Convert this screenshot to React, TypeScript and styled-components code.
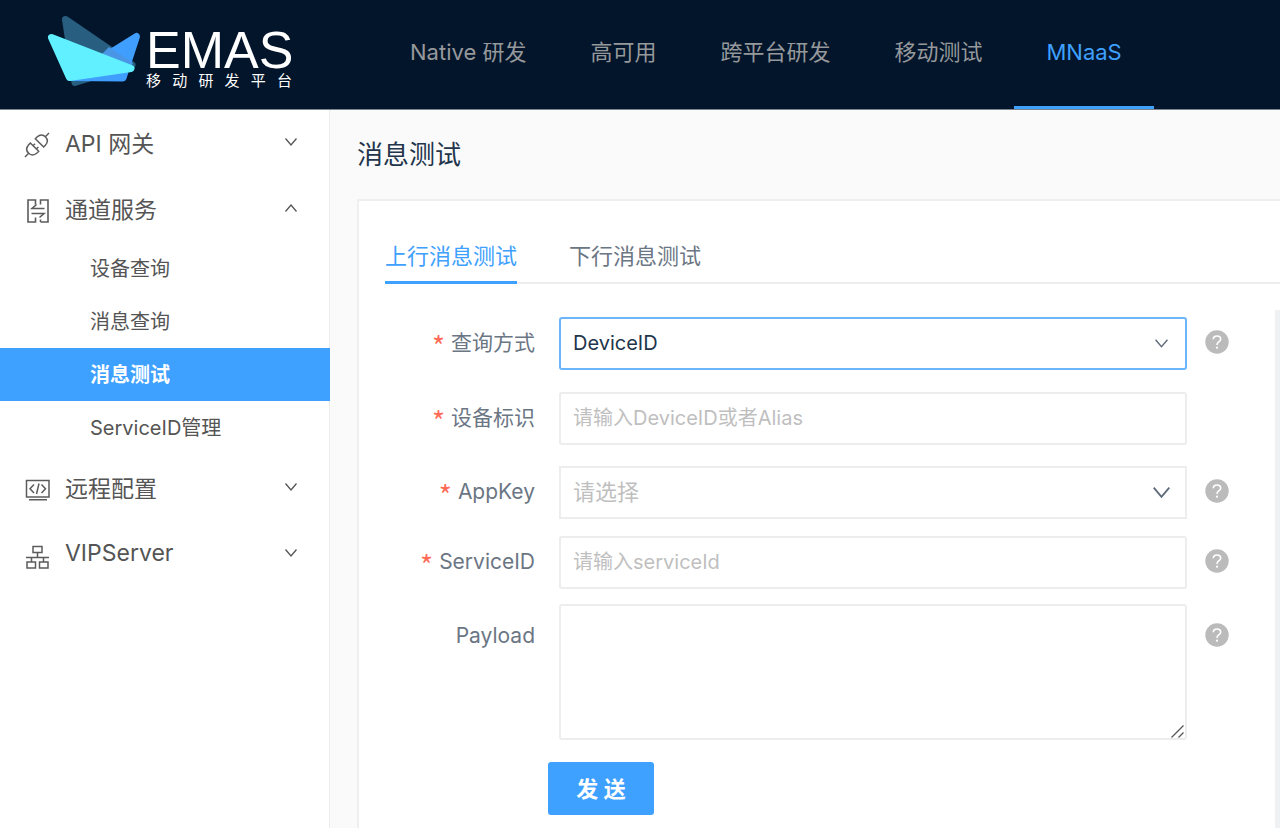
import React from "react";
import styled, { createGlobalStyle, css } from "styled-components";

const GlobalStyle = createGlobalStyle`
  *, *::before, *::after { box-sizing: border-box; }
  body {
    margin: 0;
    background: #fafafa;
    font-family: Inter, "Noto Sans CJK SC", sans-serif;
    font-size: 22px;
  }
  button, input, select, textarea { font-family: inherit; }
  ul { list-style: none; margin: 0; padding: 0; }
  a { color: inherit; text-decoration: none; }
`;

const blue = "#3ea0ff";

const Page = styled.div`
  display: flex;
  flex-direction: column;
  height: 100vh;
  overflow: hidden;
`;

const Header = styled.header`
  display: flex;
  flex: none;
  height: 110px;
  background: #03152a;
  border-bottom: 1px solid #7b8590;
`;

const Brand = styled.a`
  display: flex;
  flex: none;
  width: 378px;
  padding: 14px 0 0 46px;
  color: #fff;
`;

const BrandText = styled.div`
  width: 146px;
  padding-top: 13px;
  margin-left: 4px;
`;

const BrandName = styled.div`
  font-family: "Liberation Sans", sans-serif;
  font-size: 52px;
  line-height: 46px;
`;

const BrandSub = styled.div`
  font-size: 15px;
  line-height: 15px;
  text-align-last: justify;
`;

const Nav = styled.nav`
  display: flex;
`;

const NavLink = styled.a<{ $active?: boolean }>`
  padding: 36px 32px 0;
  line-height: 32px;
  white-space: nowrap;
  color: ${(p) => (p.$active ? blue : "#96999c")};
  border-bottom: 3px solid ${(p) => (p.$active ? blue : "transparent")};
`;

const Body = styled.div`
  display: flex;
  flex: 1;
  min-height: 0;
`;

const Sidebar = styled.aside`
  flex: none;
  width: 330px;
  background: #fff;
  border-right: 1px solid #ececec;
  color: #555;
`;

const GroupButton = styled.button`
  display: flex;
  align-items: center;
  width: 100%;
  height: 66px;
  padding: 0 32px 2px 22px;
  border: 0;
  background: none;
  color: inherit;
  font-size: 23px;
  text-align: left;
`;

const GroupIcon = styled.span`
  display: flex;
  justify-content: center;
  width: 30px;
  margin-right: 13px;
  padding-top: 5px;
  color: #5c5c5c;
`;

const GroupName = styled.span`
  flex: 1;
`;

const SubList = styled.ul`
  padding-bottom: 1px;
`;

const SubLink = styled.a<{ $active?: boolean }>`
  display: block;
  padding: 2px 0 0 90px;
  margin-right: -1px;
  font-size: 20px;
  line-height: 51px;
  ${(p) =>
    p.$active &&
    css`
      background: ${blue};
      color: #fff;
      font-weight: 600;
    `}
`;

const Main = styled.main`
  display: flex;
  flex: 1;
  flex-direction: column;
  min-width: 0;
  padding: 25px 0 0 27px;
`;

const Title = styled.h1`
  margin: 0 0 24px;
  font-size: 26px;
  line-height: 40px;
  font-weight: 400;
  color: #22354b;
`;

const Card = styled.section`
  display: flex;
  flex: 1;
  flex-direction: column;
  min-height: 0;
  background: #fff;
  border: 2px solid #efefef;
  border-right: 0;
  border-bottom: 0;
`;

const Tabs = styled.div`
  display: flex;
  gap: 52px;
  height: 83px;
  padding-top: 27px;
  margin-left: 26px;
  border-bottom: 2px solid #ededee;
`;

const Tab = styled.button<{ $active?: boolean }>`
  height: 56px;
  padding: 0 0 1px;
  border: 0;
  border-bottom: 3px solid ${(p) => (p.$active ? blue : "transparent")};
  background: none;
  font-size: 22px;
  color: ${(p) => (p.$active ? blue : "#6b7684")};
`;

const Form = styled.form`
  flex: 1;
  min-height: 0;
  margin-top: 26px;
  padding: 7px 46px 0 26px;
  border-right: 5px solid #f0f1f3;
`;

const Row = styled.div<{ $gap: number }>`
  display: grid;
  grid-template-columns: 174px minmax(0, 1fr) 42px;
  margin-bottom: ${(p) => p.$gap}px;
`;

const Label = styled.label<{ $low?: boolean }>`
  display: flex;
  justify-content: flex-end;
  gap: 6px;
  padding-right: 24px;
  font-size: 21px;
  line-height: 52px;
  padding-top: ${(p) => (p.$low ? 6 : 0)}px;
  white-space: nowrap;
  color: #6b7684;
`;

const Star = styled.span`
  padding-top: 3px;
  color: #ff6b57;
  font-family: "Noto Sans CJK SC", sans-serif;
  font-size: 28px;
  line-height: 50px;
`;

const Field = styled.div`
  position: relative;
  display: flex;
`;

const control = css`
  width: 100%;
  height: 53px;
  padding: 0 12px 1px;
  border: 2px solid #ededed;
  border-radius: 3px;
  background: #fff;
  outline: none;
  font-size: 20px;
  color: #22354b;
  &::placeholder { color: #bfbfbf; opacity: 1; }
`;

const TextInput = styled.input`
  ${control}
`;

const Select = styled.select<{ $focus?: boolean; $empty?: boolean }>`
  ${control}
  appearance: none;
  ${(p) => p.$focus && css`border-color: #6bb5fb;`}
  ${(p) =>
    p.$empty &&
    css`
      border-radius: 0;
      font-size: 22px;
      color: #bfbfbf;
    `}
`;

const TextArea = styled.textarea`
  ${control}
  display: block;
  height: 136px;
  resize: none;
`;

const Arrow = styled.span`
  position: absolute;
  right: 16px;
  top: 0;
  display: flex;
  align-items: center;
  justify-content: center;
  width: 20px;
  height: 100%;
  color: #5f6b7b;
  pointer-events: none;
`;

const Grip = styled.svg`
  position: absolute;
  right: 3px;
  bottom: 2px;
  pointer-events: none;
`;

const Help = styled.button<{ $low?: boolean }>`
  display: flex;
  align-items: center;
  width: 24px;
  height: 49px;
  padding: 0;
  margin: ${(p) => (p.$low ? 6 : 0)}px 0 0 18px;
  border: 0;
  background: none;
`;

const Submit = styled.button`
  display: block;
  width: 106px;
  height: 53px;
  margin-left: 163px;
  padding: 0 0 3px;
  border: 0;
  border-radius: 3px;
  background: ${blue};
  color: #fff;
  font-size: 22px;
  font-weight: 600;
`;

const Logo = () => (
  <svg width="96" height="74" viewBox="46 14 96 74" strokeLinejoin="round" strokeWidth="7" aria-hidden="true">
    <path d="M65.5 19.5 L132 65 L75 82.500 Z" fill="#285e80" stroke="#285e80" />
    <path d="M136.500 36.500 L123 78 L71 77.500 Z" fill="#409eff" stroke="#409eff" />
    <path d="M109 47 L133 63 L131 67 L101 55 Z" fill="#4a96e6" />
    <path d="M51.500 37.500 L131 68.500 L69.500 77.500 Z" fill="#60f0ff" stroke="#60f0ff" />
  </svg>
);

const Chevron = ({ up, size = 12 }: { up?: boolean; size?: number }) => (
  <svg width={size} height={size} viewBox="0 0 12 12" fill="none" stroke="currentColor" strokeWidth="1.300" aria-hidden="true">
    <path d={up ? "M.5 9.500 L6 3 L11.500 9.500" : "M.5 2.500 L6 9 L11.500 2.500"} />
  </svg>
);

const ApiIcon = () => (
  <svg width="26" height="26" viewBox="-2 -2 78 78" fill="none" stroke="currentColor" strokeWidth="4.500" aria-hidden="true">
    <path d="M17 31 L42 56 L37 61 C28 69 18 68 12 62 C5 55 4 45 12 36 Z M1 73 L12 62 M25 39 L31 33 M35 49 L41 43" />
    <path d="M57 43 L32 18 L37 13 C46 5 56 6 62 12 C69 19 70 29 62 38 Z M73 1 L62 12" />
  </svg>
);

const ChannelIcon = () => (
  <svg width="26" height="26" viewBox="0 0 26 26" fill="none" stroke="currentColor" strokeWidth="1.600" aria-hidden="true">
    <path d="M11.500 6.500 V2 H4 V24 H11.500 V19.500" />
    <path d="M16.500 24 H24 V2 H16.500 V6.500 M16.500 24 V21.500" />
    <path d="M12.500 6.500 L8 10.500 H20.500 M7.500 15.500 H20 L15.500 19.500" />
  </svg>
);

const CodeIcon = () => (
  <svg width="26" height="26" viewBox="0 0 26 26" fill="none" stroke="currentColor" strokeWidth="1.500" aria-hidden="true">
    <path d="M2.500 3.500 H25 V20 H2.500 Z M5 22.800 H23" />
    <path d="M10 7.500 L6 11.700 L10 16 M17.500 7.500 L21.500 11.700 L17.500 16 M15 6.500 L12.500 17" />
  </svg>
);

const ServerIcon = () => (
  <svg width="26" height="26" viewBox="0 0 26 26" fill="none" stroke="currentColor" strokeWidth="1.500" aria-hidden="true">
    <path d="M9 3.500 H18 V9.500 H9 Z M3 19 H11.500 V25 H3 Z M15.500 19 H24 V25 H15.500 Z" />
    <path d="M13.500 9.500 V14.500 M2 14.500 H25 M7.500 14.500 V19 M19.500 14.500 V19" />
  </svg>
);

const HelpButton = ({ low }: { low?: boolean }) => (
  <Help type="button" aria-label="帮助" $low={low}>
    <svg width="24" height="24" viewBox="0 0 24 24" fill="none" aria-hidden="true">
      <circle cx="12" cy="12" r="11.700" fill="#bbb" />
      <path d="M8.300 9.300 C8.300 4.900 15.700 4.900 15.700 9.300 C15.700 11.800 12 11.700 12 15" stroke="#fff" strokeWidth="1.600" />
      <circle cx="12" cy="17.700" r="1.100" fill="#fff" />
    </svg>
  </Help>
);

const navItems = ["Native 研发", "高可用", "跨平台研发", "移动测试", "MNaaS"];

const groups = [
  { name: "API 网关", icon: <ApiIcon /> },
  {
    name: "通道服务",
    icon: <ChannelIcon />,
    children: ["设备查询", "消息查询", "消息测试", "ServiceID管理"],
  },
  { name: "远程配置", icon: <CodeIcon /> },
  { name: "VIPServer", icon: <ServerIcon /> },
];

export default function App() {
  return (
    <Page>
      <GlobalStyle />
      <Header>
        <Brand href="#">
          <Logo />
          <BrandText>
            <BrandName>EMAS</BrandName>
            <BrandSub>移 动 研 发 平 台</BrandSub>
          </BrandText>
        </Brand>
        <Nav>
          {navItems.map((item) => (
            <NavLink key={item} href="#" $active={item === "MNaaS"}>
              {item}
            </NavLink>
          ))}
        </Nav>
      </Header>
      <Body>
        <Sidebar>
          <ul>
            {groups.map((group) => (
              <li key={group.name}>
                <GroupButton type="button" aria-expanded={!!group.children}>
                  <GroupIcon>{group.icon}</GroupIcon>
                  <GroupName>{group.name}</GroupName>
                  <Chevron up={!!group.children} />
                </GroupButton>
                {group.children && (
                  <SubList>
                    {group.children.map((child) => (
                      <li key={child}>
                        <SubLink href="#" $active={child === "消息测试"}>
                          {child}
                        </SubLink>
                      </li>
                    ))}
                  </SubList>
                )}
              </li>
            ))}
          </ul>
        </Sidebar>
        <Main>
          <Title>消息测试</Title>
          <Card>
            <Tabs role="tablist">
              <Tab type="button" role="tab" aria-selected="true" $active>
                上行消息测试
              </Tab>
              <Tab type="button" role="tab" aria-selected="false">
                下行消息测试
              </Tab>
            </Tabs>
            <Form onSubmit={(e) => e.preventDefault()}>
              <Row $gap={22}>
                <Label htmlFor="mode">
                  <Star>*</Star>查询方式
                </Label>
                <Field>
                  <Select id="mode" $focus defaultValue="DeviceID">
                    <option>DeviceID</option>
                    <option>Alias</option>
                  </Select>
                  <Arrow>
                    <Chevron size={13} />
                  </Arrow>
                </Field>
                <HelpButton />
              </Row>
              <Row $gap={21}>
                <Label htmlFor="device">
                  <Star>*</Star>设备标识
                </Label>
                <Field>
                  <TextInput id="device" placeholder="请输入DeviceID或者Alias" />
                </Field>
              </Row>
              <Row $gap={17}>
                <Label htmlFor="appkey">
                  <Star>*</Star>AppKey
                </Label>
                <Field>
                  <Select id="appkey" $empty defaultValue="">
                    <option value="">请选择</option>
                  </Select>
                  <Arrow>
                    <Chevron size={17} />
                  </Arrow>
                </Field>
                <HelpButton />
              </Row>
              <Row $gap={15}>
                <Label htmlFor="service">
                  <Star>*</Star>ServiceID
                </Label>
                <Field>
                  <TextInput id="service" placeholder="请输入serviceId" />
                </Field>
                <HelpButton />
              </Row>
              <Row $gap={22}>
                <Label htmlFor="payload" $low>
                  Payload
                </Label>
                <Field>
                  <TextArea id="payload" />
                  <Grip width="13" height="13" viewBox="0 0 13 13" stroke="#555" strokeWidth="1.300" aria-hidden="true">
                    <path d="M.5 12.500 L12.500 .5 M7.500 12.500 L12.500 7.500" />
                  </Grip>
                </Field>
                <HelpButton low />
              </Row>
              <Submit type="submit">发 送</Submit>
            </Form>
          </Card>
        </Main>
      </Body>
    </Page>
  );
}
